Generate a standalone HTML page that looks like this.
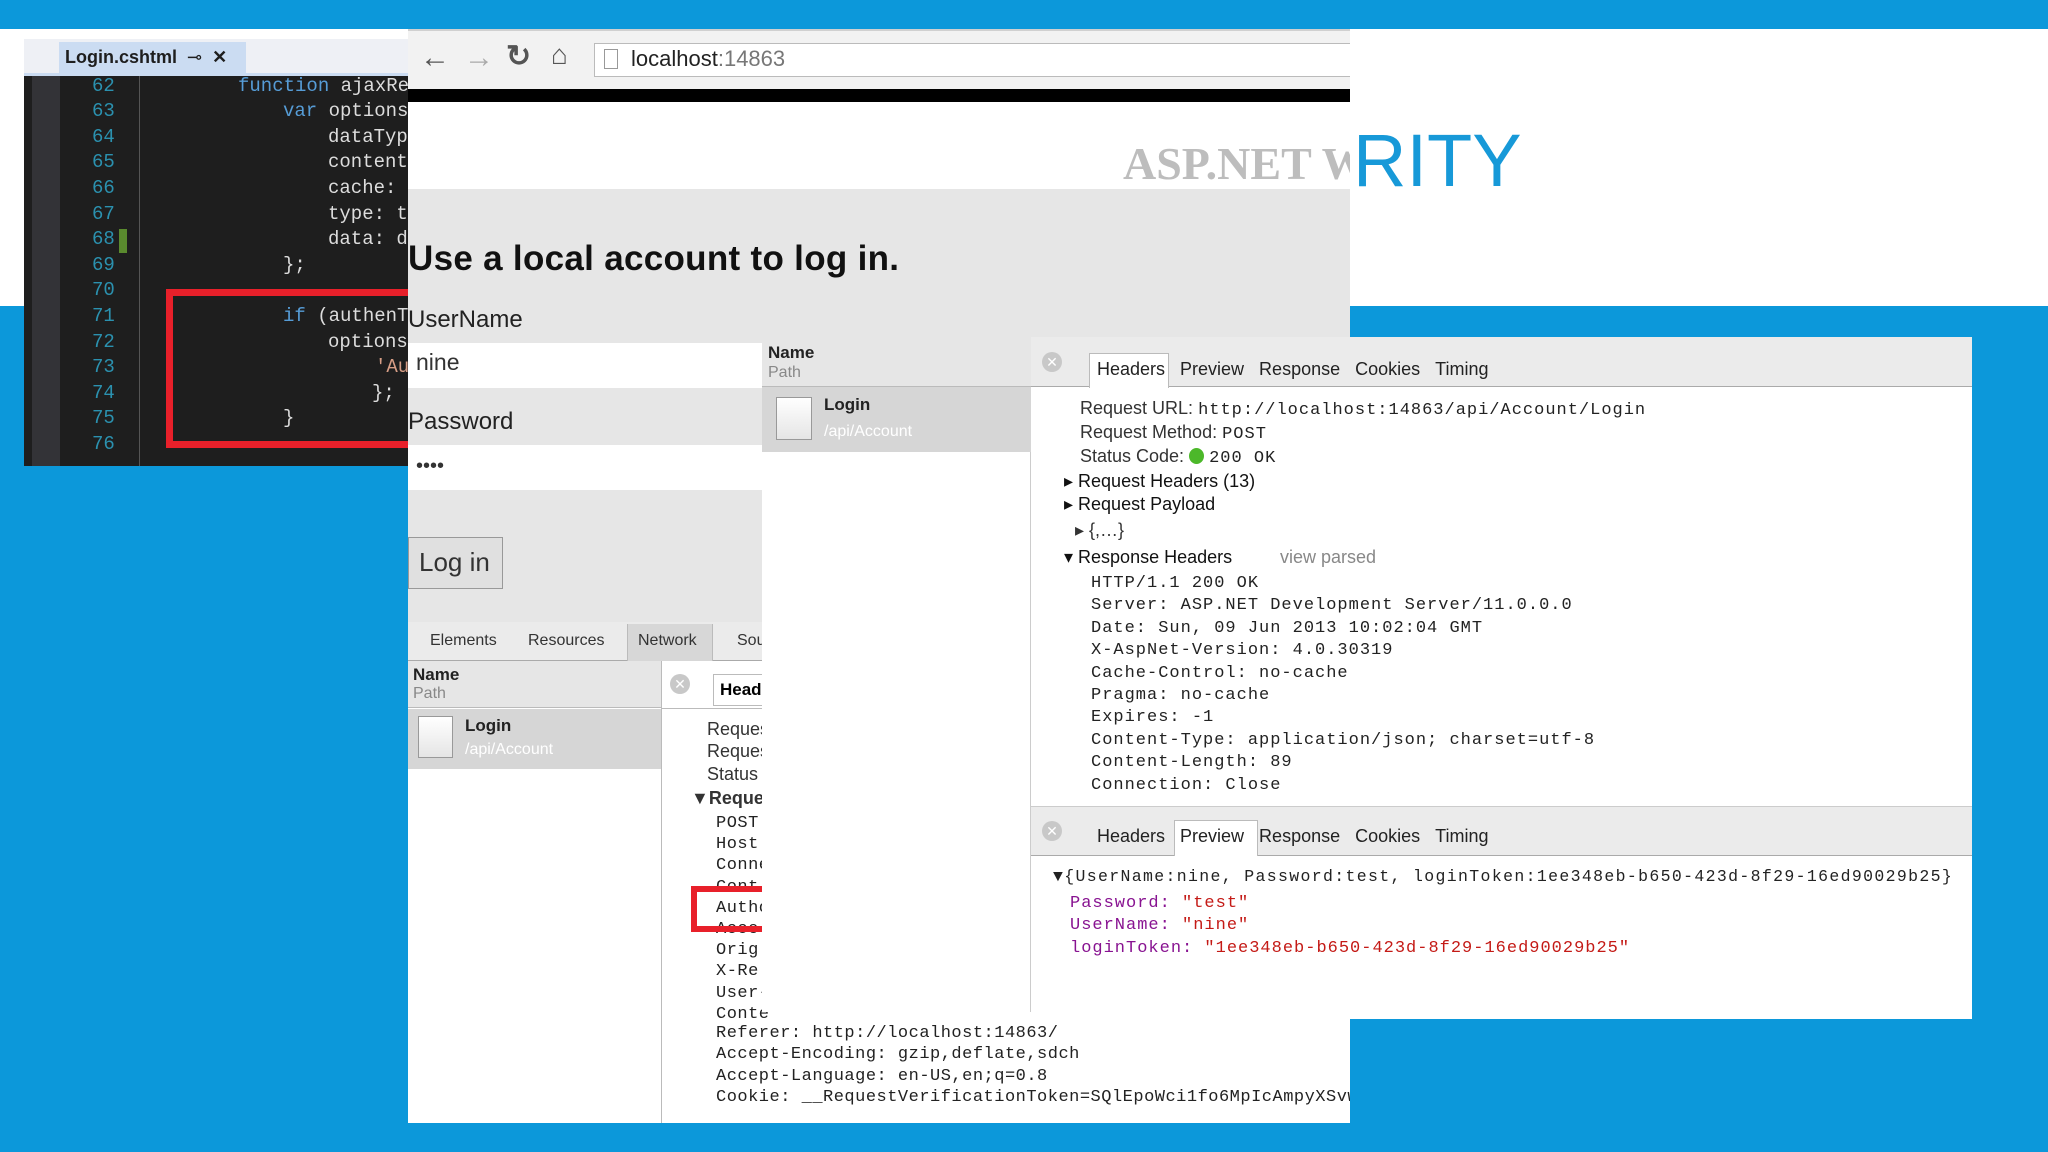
<!DOCTYPE html>
<html><head><meta charset="utf-8"><style>
*{margin:0;padding:0;box-sizing:border-box}
body{width:2048px;height:1152px;position:relative;overflow:hidden;background:#0c98da;font-family:"Liberation Sans",sans-serif}
.a{position:absolute;white-space:pre}
.code{font-family:"Liberation Mono",monospace;font-size:19px;color:#dcdcdc;left:0}
.ln{color:#2b91af;font-family:"Liberation Mono",monospace;font-size:19px;left:68px}
.k{color:#569cd6}
.hd{font-family:"Liberation Mono",monospace;font-size:17px;letter-spacing:1px;color:#222}
.lbl{font-size:18px;color:#333}
</style></head><body>
<div class="a" style="left:0;top:29px;width:2048px;height:277px;background:#fff"></div>

<!-- VS editor -->
<div class="a" style="left:24px;top:39px;width:384px;height:427px;background:#1e1e1e;overflow:hidden">
 <div class="a" style="left:0;top:0;width:384px;height:34px;background:#eef0f5"></div>
 <div class="a" style="left:35px;top:3px;width:187px;height:31px;background:#cbdcf2;font-size:18px;font-weight:bold;color:#1e1e1e;padding:5px 0 0 6px">Login.cshtml&nbsp;&nbsp;<span style="font-weight:normal">⊸</span>&nbsp;&nbsp;✕</div>
 <div class="a" style="left:0;top:34px;width:384px;height:3px;background:#cbdcf2"></div>
 <div class="a" style="left:8px;top:37px;width:28px;height:400px;background:#333337"></div>
 <div class="a" style="left:95px;top:190px;width:8px;height:24px;background:#5a8a2e"></div>
 <div class="a" style="left:115px;top:37px;width:1px;height:400px;background:#555"></div>
 <div class="a" style="left:142px;top:250px;width:260px;height:159px;border:7px solid #e8202a;border-right:none"></div>
</div>
<div class="a" style="left:24px;top:73px;width:384px;height:393px;overflow:hidden">
 <div class="a ln" style="top:2px">62</div><div class="a code" style="top:2px;left:214px"><span class="k">function</span> ajaxRe</div>
 <div class="a ln" style="top:27px">63</div><div class="a code" style="top:27px;left:259px"><span class="k">var</span> options</div>
 <div class="a ln" style="top:53px">64</div><div class="a code" style="top:53px;left:304px">dataTyp</div>
 <div class="a ln" style="top:78px">65</div><div class="a code" style="top:78px;left:304px">content</div>
 <div class="a ln" style="top:104px">66</div><div class="a code" style="top:104px;left:304px">cache: </div>
 <div class="a ln" style="top:130px">67</div><div class="a code" style="top:130px;left:304px">type: t</div>
 <div class="a ln" style="top:155px">68</div><div class="a code" style="top:155px;left:304px">data: d</div>
 <div class="a ln" style="top:181px">69</div><div class="a code" style="top:181px;left:259px">};</div>
 <div class="a ln" style="top:206px">70</div>
 <div class="a ln" style="top:232px">71</div><div class="a code" style="top:232px;left:259px"><span class="k">if</span> (authenT</div>
 <div class="a ln" style="top:258px">72</div><div class="a code" style="top:258px;left:304px">options</div>
 <div class="a ln" style="top:283px">73</div><div class="a code" style="top:283px;left:351px;color:#d69d85">'Au</div>
 <div class="a ln" style="top:309px">74</div><div class="a code" style="top:309px;left:348px">};</div>
 <div class="a ln" style="top:334px">75</div><div class="a code" style="top:334px;left:259px">}</div>
 <div class="a ln" style="top:360px">76</div>
</div>

<!-- Browser -->
<div class="a" style="left:408px;top:29px;width:942px;height:1094px;background:#fff;overflow:hidden">
 <div class="a" style="left:0;top:0;width:942px;height:60px;background:#f2f2f2;border-top:2px solid #d0d0d0"></div>
 <div class="a" style="left:12px;top:12px;font-size:30px;color:#555;font-weight:bold">&#8592;</div>
 <div class="a" style="left:56px;top:12px;font-size:30px;color:#aaa;font-weight:bold">&#8594;</div>
 <div class="a" style="left:98px;top:10px;font-size:30px;color:#555;font-weight:bold">&#8635;</div>
 <div class="a" style="left:143px;top:10px;font-size:28px;color:#555;font-weight:bold">&#8962;</div>
 <div class="a" style="left:186px;top:14px;width:760px;height:34px;background:#fff;border:1px solid #bbb"></div>
 <div class="a" style="left:196px;top:20px;width:14px;height:20px;border:1.5px solid #999"></div>
 <div class="a" style="left:223px;top:17px;font-size:22px;color:#222">localhost<span style="color:#777">:14863</span></div>
 <div class="a" style="left:0;top:60px;width:942px;height:13px;background:#000"></div>
 <div class="a" style="left:0;top:160px;width:942px;height:1000px;background:#e6e6e6"></div>
 <div class="a" style="left:715px;top:108px;font-family:'Liberation Serif',serif;font-size:46px;font-weight:bold;color:#bdbdbd">ASP.NET W</div>
 <div class="a" style="left:0;top:210px;font-size:35px;font-weight:bold;color:#111;letter-spacing:0.3px">Use a local account to log in.</div>
 <div class="a" style="left:0;top:277px;font-size:24px;color:#222">UserName</div>
 <div class="a" style="left:0;top:314px;width:354px;height:45px;background:#fff;font-size:23px;color:#333;padding:6px 0 0 8px">nine</div>
 <div class="a" style="left:0;top:379px;font-size:24px;color:#222">Password</div>
 <div class="a" style="left:0;top:416px;width:354px;height:45px;background:#fff;font-size:20px;color:#333;padding:10px 0 0 8px">••••</div>
 <div class="a" style="left:0;top:508px;width:95px;height:52px;background:#e0e0e0;border:1px solid #999;font-size:26px;color:#333;padding:9px 0 0 10px">Log in</div>
 <!-- bottom devtools -->
 <div class="a" style="left:0;top:593px;width:942px;height:501px;background:#fff"></div>
 <div class="a" style="left:0;top:593px;width:354px;height:39px;background:#ebebeb;border-bottom:1px solid #aaa"></div>
 <div class="a" style="left:219px;top:595px;width:86px;height:37px;background:#d7d7d7;border-left:1px solid #bbb;border-right:1px solid #bbb"></div>
 <div class="a" style="left:22px;top:603px;font-size:16px;color:#333">Elements</div>
 <div class="a" style="left:120px;top:603px;font-size:16px;color:#333">Resources</div>
 <div class="a" style="left:230px;top:603px;font-size:16px;color:#333">Network</div>
 <div class="a" style="left:329px;top:603px;font-size:16px;color:#333">Sou</div>
 <div class="a" style="left:0;top:632px;width:253px;height:47px;background:#e6e6e6;border-bottom:1px solid #bbb"></div>
 <div class="a" style="left:5px;top:636px;font-size:17px;font-weight:bold;color:#222">Name</div>
 <div class="a" style="left:5px;top:656px;font-size:16px;color:#888">Path</div>
 <div class="a" style="left:253px;top:632px;width:1px;height:480px;background:#bbb"></div>
 <div class="a" style="left:262px;top:645px;width:20px;height:20px;border-radius:50%;background:#c8c8c8;color:#fff;font-size:14px;text-align:center;line-height:20px">✕</div>
 <div class="a" style="left:305px;top:645px;width:60px;height:32px;background:#fff;border:1px solid #bbb;font-size:17px;font-weight:bold;padding:5px 0 0 6px">Head</div>
 <div class="a" style="left:254px;top:679px;width:100px;height:1px;background:#bbb"></div>
 <div class="a" style="left:0;top:680px;width:253px;height:60px;background:#d6d6d6"></div>
 <div class="a" style="left:10px;top:687px;width:35px;height:42px;background:linear-gradient(#fff,#e5e5e5);border:1px solid #999"></div>
 <div class="a" style="left:57px;top:687px;font-size:17px;font-weight:bold;color:#222">Login</div>
 <div class="a" style="left:57px;top:712px;font-size:16px;color:#fff">/api/Account</div>
 <div class="a lbl" style="left:299px;top:690px">Reques</div>
 <div class="a lbl" style="left:299px;top:712px">Reques</div>
 <div class="a lbl" style="left:299px;top:735px">Status (</div>
 <div class="a lbl" style="left:283px;top:759px;font-weight:bold">▼Reques</div>
 <div class="a hd" style="left:308px;top:784px;line-height:21.2px;letter-spacing:0.5px">POST
Host
Conne
Cont
Autho
Acce
Orig:
X-Re
User-
Conte</div>
 <div class="a" style="left:283px;top:857px;width:71px;height:46px;border:6px solid #e8202a;border-right:none"></div>
 <div class="a hd" style="left:308px;top:994px;line-height:21.4px;letter-spacing:0.5px">Referer: http://localhost:14863/
Accept-Encoding: gzip,deflate,sdch
Accept-Language: en-US,en;q=0.8
Cookie: __RequestVerificationToken=SQlEpoWci1fo6MpIcAmpyXSvw</div>
</div>
<div class="a" style="left:1353px;top:118px;font-size:74px;color:#1799d8">RITY</div>

<!-- Middle Name panel -->
<div class="a" style="left:762px;top:340px;width:269px;height:672px;background:#fff;border-right:1px solid #ccc">
 <div class="a" style="left:0;top:0;width:269px;height:47px;background:#e6e6e6;border-bottom:1px solid #bbb"></div>
 <div class="a" style="left:6px;top:3px;font-size:17px;font-weight:bold;color:#222">Name</div>
 <div class="a" style="left:6px;top:24px;font-size:16px;color:#888">Path</div>
 <div class="a" style="left:0;top:47px;width:269px;height:65px;background:#d6d6d6"></div>
 <div class="a" style="left:14px;top:57px;width:36px;height:43px;background:linear-gradient(#fff,#e5e5e5);border:1px solid #999"></div>
 <div class="a" style="left:62px;top:55px;font-size:17px;font-weight:bold;color:#222">Login</div>
 <div class="a" style="left:62px;top:83px;font-size:16px;color:#fff">/api/Account</div>
</div>

<!-- Right headers panel -->
<div class="a" style="left:1031px;top:337px;width:941px;height:682px;background:#fff;overflow:hidden">
 <div class="a" style="left:0;top:0;width:941px;height:50px;background:#ebebeb;border-bottom:1px solid #aaa"></div>
 <div class="a" style="left:11px;top:15px;width:20px;height:20px;border-radius:50%;background:#c8c8c8;color:#fff;font-size:14px;text-align:center;line-height:20px">✕</div>
 <div class="a" style="left:58px;top:16px;width:80px;height:35px;background:#fff;border:1px solid #bbb;border-bottom:none"></div>
 <div class="a" style="left:66px;top:22px;font-size:18px;color:#222">Headers&nbsp;&nbsp;&nbsp;Preview&nbsp;&nbsp;&nbsp;Response&nbsp;&nbsp;&nbsp;Cookies&nbsp;&nbsp;&nbsp;Timing</div>
 <div class="a lbl" style="left:49px;top:61px">Request URL: <span class="hd">http://localhost:14863/api/Account/Login</span></div>
 <div class="a lbl" style="left:49px;top:85px">Request Method: <span class="hd">POST</span></div>
 <div class="a lbl" style="left:49px;top:109px">Status Code: <span style="display:inline-block;width:15px;height:16px;border-radius:50%;background:#4cb82a;vertical-align:-2px"></span> <span class="hd">200 OK</span></div>
 <div class="a lbl" style="left:33px;top:134px;color:#111">▸ Request Headers (13)</div>
 <div class="a lbl" style="left:33px;top:157px;color:#111">▸ Request Payload</div>
 <div class="a lbl" style="left:44px;top:183px">▸ {,…}</div>
 <div class="a lbl" style="left:33px;top:210px;color:#111">▾ Response Headers</div>
 <div class="a lbl" style="left:249px;top:210px;color:#888">view parsed</div>
 <div class="a hd" style="left:60px;top:236px;line-height:22.4px">HTTP/1.1 200 OK
Server: ASP.NET Development Server/11.0.0.0
Date: Sun, 09 Jun 2013 10:02:04 GMT
X-AspNet-Version: 4.0.30319
Cache-Control: no-cache
Pragma: no-cache
Expires: -1
Content-Type: application/json; charset=utf-8
Content-Length: 89
Connection: Close</div>
 <div class="a" style="left:0;top:469px;width:941px;height:50px;background:#ebebeb;border-bottom:1px solid #aaa;border-top:1px solid #ccc"></div>
 <div class="a" style="left:11px;top:484px;width:20px;height:20px;border-radius:50%;background:#c8c8c8;color:#fff;font-size:14px;text-align:center;line-height:20px">✕</div>
 <div class="a" style="left:143px;top:483px;width:84px;height:36px;background:#fff;border:1px solid #bbb;border-bottom:none"></div>
 <div class="a" style="left:66px;top:489px;font-size:18px;color:#222">Headers&nbsp;&nbsp;&nbsp;Preview&nbsp;&nbsp;&nbsp;Response&nbsp;&nbsp;&nbsp;Cookies&nbsp;&nbsp;&nbsp;Timing</div>
 <div class="a hd" style="left:22px;top:530px;font-size:16.5px;letter-spacing:1.35px">▼{UserName:nine, Password:test, loginToken:1ee348eb-b650-423d-8f29-16ed90029b25}</div>
 <div class="a hd" style="left:39px;top:556px;line-height:22.4px;color:#881391">Password: <span style="color:#c41a16">"test"</span>
UserName: <span style="color:#c41a16">"nine"</span>
loginToken: <span style="color:#c41a16">"1ee348eb-b650-423d-8f29-16ed90029b25"</span></div>
</div>
</body></html>
